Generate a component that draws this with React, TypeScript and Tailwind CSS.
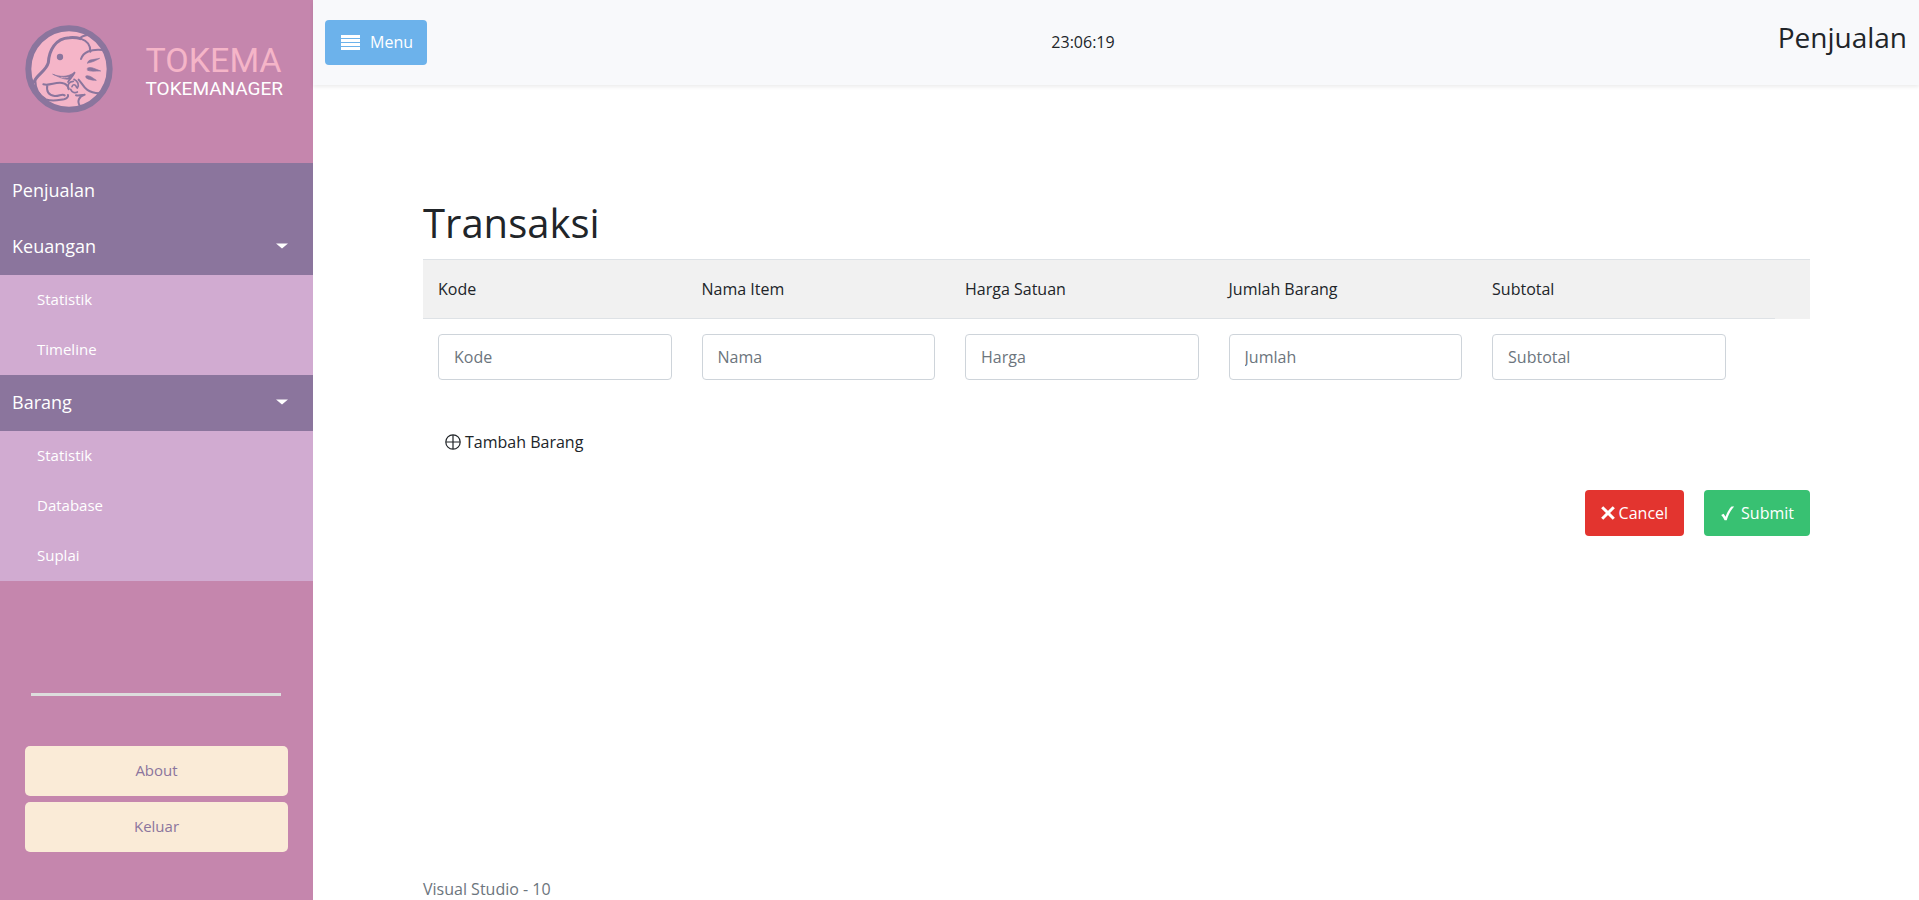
import { useState } from "react";

const columns = [
  { id: "kode", title: "Kode", placeholder: "Kode" },
  { id: "nama", title: "Nama Item", placeholder: "Nama" },
  { id: "harga", title: "Harga Satuan", placeholder: "Harga" },
  { id: "jumlah", title: "Jumlah Barang", placeholder: "Jumlah" },
  { id: "subtotal", title: "Subtotal", placeholder: "Subtotal" },
];

const groups = [
  { title: "Keuangan", items: ["Statistik", "Timeline"] },
  { title: "Barang", items: ["Statistik", "Database", "Suplai"] },
];

function Logo() {
  return (
    <svg viewBox="29 29 264 264" className="size-[88px] shrink-0" fill="none" stroke="#8b759d" strokeLinecap="round" strokeLinejoin="round" aria-hidden="true">
      <circle cx="161" cy="161" r="122" fill="#f5b5c8" strokeWidth="18" />
      <path d="M56 200C66 176 92 168 99 142C101 106 120 68 162 67C176 66 186 67 196 70" strokeWidth="9" />
      <path d="M193 70C198 62 210 60 220 58M196 70C214 76 226 90 225 109" strokeWidth="6" />
      <path d="M197 131C203 112 226 99 264 104" strokeWidth="6" />
      <circle cx="134" cy="125" r="9.5" fill="#8b759d" stroke="none" />
      <path d="M217 143C218 131 232 134 253 129C242 136 230 141 217 143ZM217 158C226 153 240 161 256 167C240 167 224 169 217 165ZM212 182C222 178 232 188 243 195C229 195 214 191 212 187Z" fill="#8b759d" strokeWidth="2" />
      <path d="M113 177C132 185 158 187 178 170C177 178 170 184 164 186C168 189 167 193 160 192C142 192 128 184 113 177Z" fill="#8b759d" strokeWidth="2" />
      <path d="M138 186C148 188 154 187 158 186" stroke="#f5b5c8" strokeWidth="2" />
      <path d="M60 196C60 222 74 242 92 252C112 260 130 254 146 252C154 250 160 244 158 239" strokeWidth="6" />
      <path d="M84 207C104 212 118 200 140 203C152 205 158 212 160 220M96 210C92 228 100 240 118 242C132 243 140 234 148 240" strokeWidth="6" />
      <path d="M160 222C154 208 162 198 174 198M170 214C172 206 180 206 184 216M178 172C172 184 164 190 158 200M176 192C188 198 192 208 186 218M166 222C170 232 180 234 186 230" strokeWidth="5" />
      <path d="M190 193C204 206 206 232 252 234" strokeWidth="6" />
      <path d="M182 240C190 242 196 240 208 238C192 244 182 256 196 276" strokeWidth="6" />
    </svg>
  );
}

function Sidebar() {
  return (
    <aside className="flex w-[313px] shrink-0 flex-col bg-[#c586ad] text-white">
      <div className="flex h-[163px] items-start justify-between pt-[25px] pr-[30px] pl-[25px]">
        <Logo />
        <div className="flex flex-col pt-4 font-['Roboto',sans-serif]">
          <span className="text-[34px] leading-[38px] text-[#f5b5c8]">TOKEMA</span>
          <span className="text-[19px] leading-5">TOKEMANAGER</span>
        </div>
      </div>
      <nav>
        <a href="#penjualan" className="flex h-14 items-center bg-[#8b759d] px-3 pb-0.5 text-lg">
          Penjualan
        </a>
        {groups.map((group) => (
          <div key={group.title}>
            <a href={"#" + group.title} className="flex h-14 items-center justify-between bg-[#8b759d] pr-[25px] pb-0.5 pl-3 text-lg">
              {group.title}
              <svg viewBox="0 0 12 6" className="h-[6px] w-3" fill="currentColor" aria-hidden="true">
                <path d="M0 0.5H12L6 5.5Z" />
              </svg>
            </a>
            <ul className="bg-[#d1abd1]">
              {group.items.map((item) => (
                <li key={item}>
                  <a href={"#" + item} className="flex h-[50px] items-center px-[37px] pb-0.5 text-[15px]">
                    {item}
                  </a>
                </li>
              ))}
            </ul>
          </div>
        ))}
      </nav>
      <hr className="mt-28 mr-8 ml-[31px] border-t-[3px] border-[#dddddd]" />
      <div className="mt-[50px] flex flex-col gap-[6px] px-[25px]">
        <a href="#about" className="flex h-[50px] items-center justify-center rounded-[5px] bg-[#faebd7] pb-0.5 text-[15px] text-[#8b759d]">
          About
        </a>
        <a href="#keluar" className="flex h-[50px] items-center justify-center rounded-[5px] bg-[#faebd7] pb-0.5 text-[15px] text-[#8b759d]">
          Keluar
        </a>
      </div>
    </aside>
  );
}

export default function App() {
  const [open, setOpen] = useState(true);
  return (
    <div className="flex min-h-screen bg-white font-['Open_Sans',sans-serif] text-base text-[#212529]">
      {open && <Sidebar />}
      <div className="flex min-w-0 flex-1 flex-col">
        <header className="grid h-[85px] grid-cols-[11fr_auto_12fr] items-center bg-[#f8f9fb] px-3 shadow-[0_2px_4px_rgba(0,0,0,0.08)]">
          <button type="button" onClick={() => setOpen(!open)} className="flex h-[45px] w-[102px] items-center gap-[10px] rounded-[4px] bg-[#6cb2eb] px-4 pb-px text-white">
            <svg viewBox="0 0 19 15" className="h-[15px] w-[19px] shrink-0" fill="currentColor" aria-hidden="true">
              <path d="M0 0H19V3H0ZM0 4H19V7H0ZM0 8H19V11H0ZM0 12H19V15H0Z" />
            </svg>
            Menu
          </button>
          <time className="pb-px">23:06:19</time>
          <h2 className="pb-3 text-right text-[28px] leading-9">Penjualan</h2>
        </header>
        <main className="flex flex-1 flex-col pt-[110px] pr-[109px] pl-[110px]">
          <h1 className="mb-2 text-[40px] leading-[56px]">Transaksi</h1>
          <table className="w-full table-fixed border-collapse text-left">
            <colgroup>
              {columns.map((column) => (
                <col key={column.id} className="w-[19%]" />
              ))}
              <col />
              <col />
            </colgroup>
            <thead>
              <tr className="h-[59px] border-t border-[#dee2e6] bg-[#f1f1f1]">
                {columns.map((column) => (
                  <th key={column.id} scope="col" className="border-b border-[#dee2e6] px-[15px] font-normal">
                    {column.title}
                  </th>
                ))}
                <td className="border-b border-[#dee2e6]" />
                <td />
              </tr>
            </thead>
            <tbody>
              <tr>
                {columns.map((column) => (
                  <td key={column.id} className="p-[15px]">
                    <input
                      type="text"
                      aria-label={column.title}
                      placeholder={column.placeholder}
                      className="block h-[46px] w-full rounded-[4px] border border-[#ced4da] bg-white px-[15px] placeholder:text-[#6c757d]"
                    />
                  </td>
                ))}
                <td />
                <td />
              </tr>
            </tbody>
          </table>
          <button type="button" className="mt-6 ml-[22px] flex h-[46px] items-center gap-1 self-start">
            <svg viewBox="0 0 16 16" className="size-4" fill="none" stroke="currentColor" strokeWidth="1.2" aria-hidden="true">
              <circle cx="8" cy="8" r="7.2" />
              <path d="M8 1V15M1 8H15" />
            </svg>
            Tambah Barang
          </button>
          <div className="mt-[25px] flex justify-end gap-5">
            <button type="button" className="flex h-[46px] items-center gap-1 rounded-[4px] bg-[#e3342f] px-4 text-white">
              <svg viewBox="0 0 14 14" className="size-[14px]" fill="none" stroke="currentColor" strokeWidth="3" aria-hidden="true">
                <path d="M1.2 1.2L12.8 12.8M12.8 1.2L1.2 12.8" />
              </svg>
              Cancel
            </button>
            <button type="submit" className="flex h-[46px] items-center gap-[6px] rounded-[4px] bg-[#38c172] px-4 text-white">
              <svg viewBox="0 0 15 15" className="size-[15px]" fill="currentColor" aria-hidden="true">
                <path d="M1.2 9L3.6 7.7L5.6 10.7C7 6.8 9 3 11.5 0.5H14.2C10.6 4.4 8.2 9 6.7 14.3H4.6C3.8 12.3 2.6 10.5 1.2 9Z" />
              </svg>
              Submit
            </button>
          </div>
          <footer className="mt-auto leading-[22px] text-[#6c757d]">Visual Studio - 10</footer>
        </main>
      </div>
    </div>
  );
}
